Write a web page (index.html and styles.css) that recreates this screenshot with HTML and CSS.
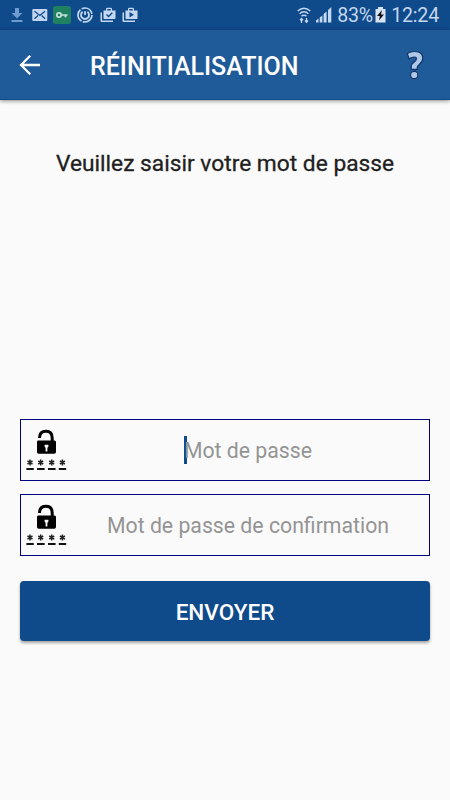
FILE: index.html
```
<!DOCTYPE html>
<html lang="fr">

<head>
    <meta charset="UTF-8">
    <meta name="viewport" content="width=device-width, initial-scale=1.0">
    <title>Réinitialisation</title>
    <link rel="stylesheet" href="styles.css">
</head>

<body>
    <!-- barre de statut -->
    <div class="status">
        <div class="notifs">
            <svg width="12" height="16" viewBox="0 0 12 16"><path fill="#6f9bce" d="M4 1h4v5h3.400L6 11.500.6 6H4zM.5 13h11v2H.5z"/></svg>
            <svg class="mail" width="16" height="12" viewBox="0 0 16 12"><rect width="15" height="12" x=".3" rx="1" fill="#c3d7f0"/><path d="M2.500 2.300 7.800 6.500 13.100 2.300M2.500 9.700 6 6.500M13.100 9.700 9.600 6.500" fill="none" stroke="#0f4a8b" stroke-width="1.300"/></svg>
            <svg class="key" width="18" height="18" viewBox="0 0 18 18"><rect width="18" height="18" rx="2.500" fill="#208062"/><circle cx="6" cy="9" r="2.200" fill="none" stroke="#c5e0dc" stroke-width="1.700"/><path d="M8 8.200h6.500v1.600h-1v1.500H11.500V9.800H8z" fill="#c5e0dc"/></svg>
            <svg class="sync" width="16" height="16" viewBox="0 0 16 16" fill="none" stroke="#c3d7f0"><circle cx="8" cy="8" r="7" stroke-width="1.700" stroke-dasharray="13.200 1.460"/><path d="M5.600 4.800a4 4 0 1 0 4.800 0M8 4.200V8" stroke-width="1.800"/></svg>
            <svg class="bag" width="16" height="16" viewBox="0 0 16 16"><path fill="#c3d7f0" fill-rule="evenodd" d="M3.500 3.500H6V2q0-1.300 1.300-1.300h3.400Q12 .7 12 2v1.500h3.500V11q0 1-1 1h-10q-1 0-1-1zM7.300 3.500h3.400V2H7.300zM.5 5.500H2v8h11V15H1.500q-1 0-1-1z"/><path d="m6.500 7.500 2 2 3.800-3.800" fill="none" stroke="#0f4a8b" stroke-width="1.400"/></svg>
            <svg class="bag" width="16" height="16" viewBox="0 0 16 16"><path fill="#c3d7f0" fill-rule="evenodd" d="M3.500 3.500H6V2q0-1.300 1.300-1.300h3.400Q12 .7 12 2v1.500h3.500V11q0 1-1 1h-10q-1 0-1-1zM7.300 3.500h3.400V2H7.300zM.5 5.500H2v8h11V15H1.500q-1 0-1-1z"/><path d="M7.500 5 12 7.700l-4.500 2.800z" fill="#0f4a8b"/></svg>
        </div>
        <div class="infos">
            <svg class="wifi" width="14" height="17" viewBox="0 0 14 17" fill="none" stroke="#c3d7f0"><path d="M.7 4q6.300-5.500 12.600 0M2.600 6.700q4.400-3.800 8.800 0M4.500 9.200q2.500-2 5 0" stroke-width="1.500"/><path d="M4.500 16v-4M9.500 11v4M3 13.300 4.500 11.600 6 13.300M8 13.500l1.500 1.700L11 13.500" stroke-width="1.300"/></svg>
            <svg class="signal" width="16" height="16" viewBox="0 0 16 16" fill="#c3d7f0"><path d="M0 15.500v-2l2.500-2v4zM3.700 15.500v-5l2.700-2v7zM7.600 15.500v-8.500l3-2.500v11zM12 15.500V3l3.300-3v15.500z"/></svg>
            <span class="percent">83%</span>
            <svg class="battery" width="11" height="16" viewBox="0 0 11 16"><path d="M3 0h5v2h2.500v13.500H.5V2H3z" fill="#d9e5f5"/><path d="M7 3 2 9h2.800L4 13.500 9 7.500H6z" fill="#111"/></svg>
            <span class="time">12:24</span>
        </div>
    </div>

    <div class="header">
        <svg class="back" width="22" height="22" viewBox="0 0 22 22"><path d="M21 11H2.500M11.200 1.700 2 11l9.200 9.300" fill="none" stroke="#fff" stroke-width="2.300"/></svg>
        <h1>RÉINITIALISATION</h1>
        <svg class="help" width="18" height="30" viewBox="0 0 18 30"><path d="M1.200 3.500Q4.500 1.500 8.800 1.500 16.800 1.500 16.800 8.200q0 3.400-3.300 6Q11.200 16 11.200 17.500v1.800H5.200V17q0-3 3-5 2.200-1.600 2.200-3.200 0-1.800-2.200-1.800Q5.800 7 3.200 8.800z" fill="#b0c8e8" stroke="#103568" stroke-width="1.200"/><circle cx="8.200" cy="25" r="3.700" fill="#b0c8e8" stroke="#103568" stroke-width="1.200"/></svg>
    </div>

    <div class="content">
        <p class="intro">Veuillez saisir votre mot de passe</p>

        <div class="field">
            <svg class="lock" width="42" height="42" viewBox="0 0 42 42">
                <path d="M13.500 9Q13.500 2.300 20 2.300 26.200 2.300 26.200 9v4" fill="none" stroke="#000" stroke-width="3"/>
                <path fill="#000" fill-rule="evenodd" d="M12 11.500h16.500q1.500 0 1.500 1.500v10q0 1.800-1.800 1.800h-15.500Q11 24.800 11 23V13q0-1.500 1-1.500zM18.600 15.700v2l1 1v3.800h1.800v-3.800l1-1v-2z"/>
                <path d="M4 30.500v6M1.500 32l5 3M6.500 32l-5 3M14.700 30.500v6M12.200 32l5 3M17.200 32l-5 3M25.700 30.500v6M23.200 32l5 3M28.200 32l-5 3M36.400 30.500v6M33.900 32l5 3M38.900 32l-5 3" stroke="#222" stroke-width="1.500"/>
                <path d="M.4 40h7.400M11 40h7.600M22 40h7.600M32.800 40h7.400" stroke="#111" stroke-width="2.200"/>
            </svg>
            <div class="input"><span class="cursor"></span><span class="hint">Mot de passe</span></div>
        </div>

        <div class="field">
            <svg class="lock" width="42" height="42" viewBox="0 0 42 42">
                <path d="M13.500 9Q13.500 2.300 20 2.300 26.200 2.300 26.200 9v4" fill="none" stroke="#000" stroke-width="3"/>
                <path fill="#000" fill-rule="evenodd" d="M12 11.500h16.500q1.500 0 1.500 1.500v10q0 1.800-1.800 1.800h-15.500Q11 24.800 11 23V13q0-1.500 1-1.500zM18.600 15.700v2l1 1v3.800h1.800v-3.800l1-1v-2z"/>
                <path d="M4 30.500v6M1.500 32l5 3M6.500 32l-5 3M14.700 30.500v6M12.200 32l5 3M17.200 32l-5 3M25.700 30.500v6M23.200 32l5 3M28.200 32l-5 3M36.400 30.500v6M33.900 32l5 3M38.900 32l-5 3" stroke="#222" stroke-width="1.500"/>
                <path d="M.4 40h7.400M11 40h7.600M22 40h7.600M32.800 40h7.400" stroke="#111" stroke-width="2.200"/>
            </svg>
            <div class="input"><span class="hint">Mot de passe de confirmation</span></div>
        </div>

        <button class="send">ENVOYER</button>
    </div>
</body>

</html>
```

FILE: styles.css
```
* {
    margin: 0;
    padding: 0;
    box-sizing: border-box;
}

body {
    height: 800px;
    background-color: #fafafa;
    font-family: Roboto, "Liberation Sans", sans-serif;
    overflow: hidden;
}

svg {
    display: block;
    flex: none;
}

/* barre de statut */
.status {
    height: 30px;
    padding: 0 11px 0 11px;
    background-color: #0f4a8b;
    display: flex;
    justify-content: space-between;
}

.notifs,
.infos {
    display: flex;
    align-items: center;
}

.mail {
    margin-left: 9px;
}

.key {
    margin-left: 5px;
}

.sync {
    margin-left: 6px;
}

.bag {
    margin-left: 6.500px;
}

.infos {
    color: #c3d7f0;
    font-size: 19.600px;
    letter-spacing: -0.2px;
    line-height: 28px;
}

.signal {
    margin-left: 5px;
}

.percent {
    width: 35px;
    margin-left: 5px;
    padding-top: 2px;
}

.battery {
    margin-left: 3px;
}

.time {
    margin-left: 5px;
    padding-top: 2px;
}

/* en-tete */
.header {
    height: 70px;
    padding: 0 26px 0 19px;
    background-color: #205b99;
    border-bottom: 1px solid #0f4a8b;
    box-shadow: 0 1px 4px rgba(0, 0, 0, 0.45);
    display: flex;
    align-items: center;
}

.header h1 {
    margin-left: 49px;
    padding-top: 3px;
    flex: 1;
    font-size: 25px;
    font-weight: 500;
    color: #fff;
    white-space: nowrap;
}

/* contenu */
.content {
    padding: 49px 20px 0;
}

.intro {
    height: 270px;
    font-size: 22.750px;
    line-height: 30px;
    color: #212121;
    -webkit-text-stroke: 0.3px #212121;
    text-align: center;
    white-space: nowrap;
}

.field {
    height: 62px;
    margin-bottom: 13px;
    padding-left: 5px;
    border: 1px solid #000080;
    display: flex;
    align-items: center;
}

.input {
    flex: 1;
    padding-right: 1px;
    display: flex;
    align-items: center;
    justify-content: center;
}

.cursor {
    width: 3px;
    height: 28px;
    margin-right: -3px;
    background-color: #0f4a8b;
}

.hint {
    padding-top: 2px;
    font-size: 21.250px;
    line-height: 30px;
    color: #949494;
    white-space: nowrap;
}

.send {
    display: block;
    width: 100%;
    height: 60px;
    margin-top: 25px;
    padding-top: 1px;
    border: none;
    border-radius: 4px;
    background-color: #0f4a8b;
    box-shadow: 0 2px 3px rgba(0, 0, 0, 0.35);
    font-family: inherit;
    font-size: 22.500px;
    font-weight: 500;
    color: #fff;
}
```
